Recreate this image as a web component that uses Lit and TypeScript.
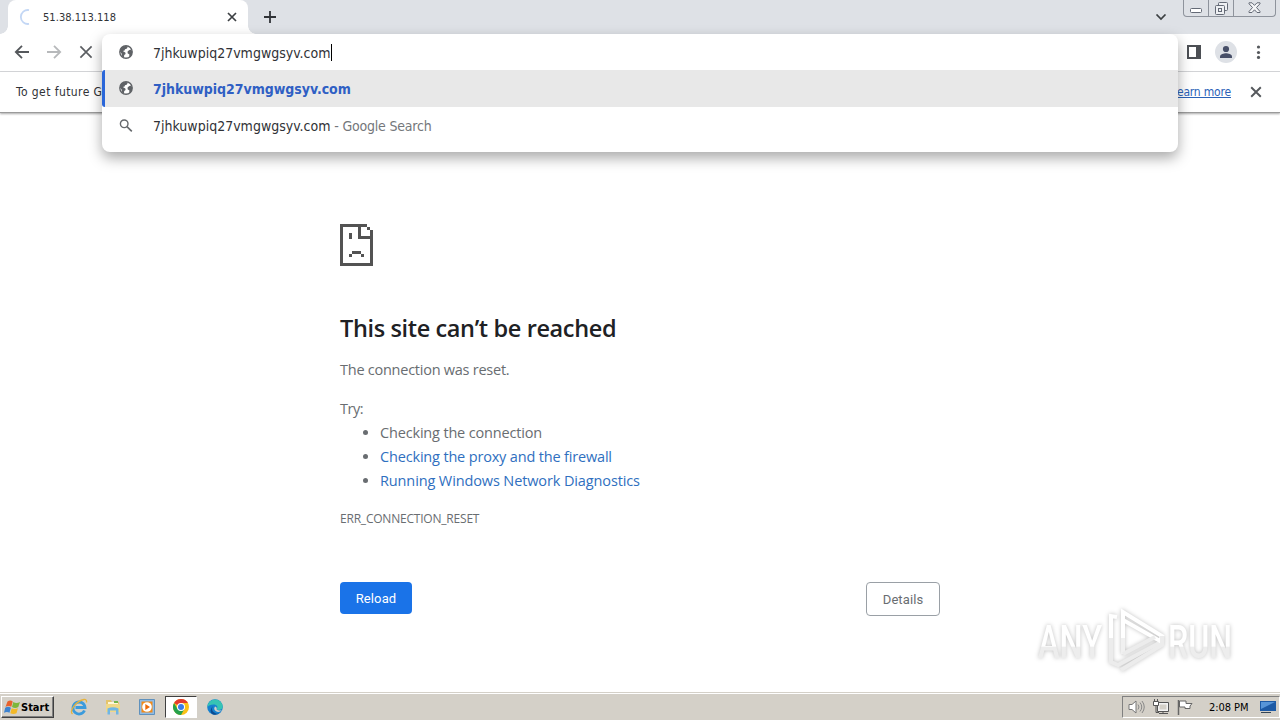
import { LitElement, html, css } from "lit";
import { customElement } from "lit/decorators.js";

const globe = html`<svg width="14" height="14" viewBox="0 0 14 14"><circle cx="7" cy="7" r="6.200" fill="#fff" stroke="#5f6266" stroke-width="1.400"/><path fill="#5f6266" d="M.9 6.500C1 3 4 .8 7.500.9L8.600 2 8 3.600 6 4.200 5.600 5.600 3.800 6 6.300 7.600 6.600 9 5.200 10 5 12.500 3 11.500 2.600 8.600z"/><path fill="#5f6266" d="M10 5.200L11.500 4.600 13.200 6 13 9 11 12 10.200 11.300 10.400 9.500 8.600 8.300 8.600 6.500z"/></svg>`;

const cross = (size: number, color: string, weight: number) => html`<svg width=${size} height=${size} viewBox="0 0 10 10"><path d="M1 1L9 9M9 1L1 9" stroke=${color} stroke-width=${weight} fill="none"/></svg>`;

@customElement("browser-chrome")
export class BrowserChrome extends LitElement {
  static styles = css`
    :host { display: block; font-family: "DejaVu Sans Condensed", "DejaVu Sans", sans-serif; color: #303236; }
    svg { display: block; flex: none; }
    .tabs { height: 34px; background: #dee1e6; display: flex; align-items: stretch; }
    .tab { position: relative; width: 240px; margin-left: 8px; background: #fff; border-radius: 8px 8px 0 0; display: flex; align-items: center; box-sizing: border-box; padding: 0 11px 0 11px; }
    .tab::before, .tab::after { content: ""; position: absolute; bottom: 0; width: 8px; height: 8px; }
    .tab::before { left: -8px; background: radial-gradient(circle at 0 0, transparent 7.5px, #fff 8px); }
    .tab::after { right: -8px; background: radial-gradient(circle at 100% 0, transparent 7.5px, #fff 8px); }
    .title { flex: 1; margin-left: 8px; font-size: 11px; letter-spacing: 0.05px; }
    .plus { margin: 11px 0 0 16px; }
    .chevron { margin: 14px 0 0 auto; }
    .controls { display: flex; width: 91px; height: 16px; margin: 0 4px 0 16px; border: 1px solid #8e939c; border-top: 0; border-radius: 0 0 4px 4px; box-sizing: content-box; }
    .controls span { display: flex; align-items: center; justify-content: center; border-right: 1px solid #8e939c; width: 24px; }
    .controls span:last-child { border: 0; width: auto; flex: 1; }
    .bar { background: #fff; border-bottom: 1px solid #d5d7da; display: flex; align-items: center; box-sizing: border-box; height: 38px; padding: 0 15px 1px 14px; }
    .nav { display: flex; gap: 17.5px; align-items: center; }
    .right { margin-left: auto; display: flex; align-items: center; }
    .avatar { margin: 0 15px 0 14px; }
    .info { height: 40px; background: #fff; border-bottom: 1px solid #9b9b9b; box-shadow: 0 1px 2px #aaa; display: flex; align-items: center; padding: 0 18px 0 16px; font-size: 12px; }
    .message { letter-spacing: .42px; }
    .link { margin-left: auto; margin-right: 19px; color: #2b62b8; text-decoration: underline; letter-spacing: -.18px; }
  `;
  render() {
    return html`
      <div class="tabs">
        <div class="tab">
          <svg width="16" height="16" viewBox="0 0 16 16"><path d="M10 1.100A7 7 0 1 0 10 14.900" fill="none" stroke="#c3d7f5" stroke-width="1.800"/></svg>
          <span class="title">51.38.113.118</span>${cross(10, "#3c4043", 1.7)}
        </div>
        <svg class="plus" width="12" height="12" viewBox="0 0 12 12"><path d="M6 0V12M0 6H12" stroke="#303338" stroke-width="1.800"/></svg>
        <svg class="chevron" width="12" height="7" viewBox="0 0 12 7"><path d="M1.500 .5L6 5L10.500 .5" fill="none" stroke="#3c4043" stroke-width="1.700"/></svg>
        <div class="controls">
          <span><svg width="13" height="12"><rect x=".5" y="6.500" width="11" height="4" rx="1" fill="#fff" stroke="#646a76"/></svg></span>
          <span><svg width="13" height="13"><g fill="#eef0f3" stroke="#646a76"><rect x="3.500" y=".5" width="9" height="8" rx="1"/><rect x=".5" y="3.500" width="9" height="9" rx="1"/><rect x="3.500" y="6.500" width="3" height="3"/></g></svg></span>
          <span><svg width="13" height="12"><path d="M1 .8h3l2.500 2.600L9 .8h3v1L8.500 5.500 12 9.500v1H9L6.500 7.800 4 10.500H1v-1L4.500 5.500 1 1.800z" fill="#f4f5f7" stroke="#646a76"/></svg></span>
        </div>
      </div>
      <div class="bar">
        <div class="nav">
          <svg width="15" height="14" viewBox="0 0 15 14"><path d="M15 7H2M8 .8L1.800 7L8 13.200" fill="none" stroke="#55585c" stroke-width="1.800"/></svg>
          <svg width="15" height="14" viewBox="0 0 15 14"><path d="M0 7H13M7 .8L13.200 7L7 13.200" fill="none" stroke="#b7b9bb" stroke-width="1.800"/></svg>
          ${cross(14, "#5b5e62", 1.2)}
        </div>
        <div class="right">
          <svg width="14" height="14"><path d="M1 1H13V13H1Z" fill="#fff" stroke="#4c4f54" stroke-width="2"/><path d="M9 0h5v14H9z" fill="#4c4f54"/></svg>
          <svg class="avatar" width="22" height="22"><circle cx="11" cy="11" r="11" fill="#dee1e6"/><circle cx="11" cy="8" r="3.100" fill="#474f68"/><path d="M5 17v-1.500c0-2.200 4-3.300 6-3.300s6 1.100 6 3.300V17z" fill="#474f68"/></svg>
          <svg width="13" height="14"><g fill="#55585c"><circle cx="6.500" cy="2" r="1.600"/><circle cx="6.500" cy="7.500" r="1.600"/><circle cx="6.500" cy="12.400" r="1.600"/></g></svg>
        </div>
      </div>
      <div class="info"><span class="message">To get future Google</span><span class="link">Learn more</span>${cross(12, "#55585c", 1.6)}</div>
    `;
  }
}

@customElement("omnibox-popup")
export class OmniboxPopup extends LitElement {
  static styles = css`
    :host { display: block; background: #fff; border-radius: 8px; overflow: hidden; font: 14px "DejaVu Sans Condensed", "DejaVu Sans", sans-serif; color: #303236; box-shadow: 0 6px 14px rgba(0, 0, 0, .34); }
    .row { display: flex; align-items: center; height: 37px; padding-left: 17px; white-space: pre; }
    .input { height: 36px; }
    .selected { background: #e8e8e8; border-left: 3px solid #2a66d9; border-radius: 3px 0 0 3px; padding-left: 14px; color: #2f5fc4; font-weight: bold; }
    .selected svg { margin-bottom: 1px; }
    .text { margin-left: 20px; }
    .input .text { padding-top: 1px; }
    .selected .text { letter-spacing: -.04px; }
    .input .text, .last .text { letter-spacing: 0; }
    .caret { width: 1px; height: 17px; margin-left: 1px; background: #000; }
    .dim { color: #74777b; letter-spacing: -.2px; }
    .last { height: 38px; }
    svg { display: block; flex: none; }
  `;
  render() {
    return html`
      <div class="row input">${globe}<span class="text">7jhkuwpiq27vmgwgsyv.com</span><i class="caret"></i></div>
      <div class="row selected">${globe}<span class="text">7jhkuwpiq27vmgwgsyv.com</span></div>
      <div class="row last">
        <svg width="14" height="14" viewBox="0 0 14 14"><circle cx="5.200" cy="4.800" r="3.800" fill="none" stroke="#66696d" stroke-width="1.400"/><path d="M8 7.600L12.800 12.400" stroke="#66696d" stroke-width="1.600"/></svg>
        <span class="text">7jhkuwpiq27vmgwgsyv.com</span><span class="dim"> - Google Search</span>
      </div>`;
  }
}

@customElement("error-page")
export class ErrorPage extends LitElement {
  static styles = css`
    :host { display: block; width: 600px; margin: 0 auto; padding-top: 111px; font: 14.5px/24px "Open Sans", "Noto Sans", sans-serif; color: #696d71; }
    svg { display: block; }
    h1 { margin: 47px 0 0; font-size: 23.5px; line-height: 30px; font-weight: 600; color: #202124; letter-spacing: -.37px; }
    p { margin: 15px 0 0; }
    .p1 { letter-spacing: -.25px; }
    .try { margin-top: 15px; letter-spacing: -.5px; }
    ul { margin: 0; padding-left: 40px; }
    .l1 { letter-spacing: -.17px; }
    .l2 { letter-spacing: -.17px; }
    .l3 { letter-spacing: -.12px; }
    .blue { color: #2f6fc0; }
    .code { font-size: 12px; margin-top: 14px; letter-spacing: -.21px; }
    .actions { display: flex; justify-content: space-between; margin-top: 51px; font: 13px/33px Roboto, "Liberation Sans", sans-serif; letter-spacing: .1px; }
    .btn { box-sizing: border-box; text-align: center; border-radius: 4px; }
    .reload { width: 72px; height: 32px; color: #fff; background: #1a73e8; }
    .details { width: 74px; height: 34px; border: 1px solid #9aa0a6; }
  `;
  render() {
    return html`
      <svg width="33" height="42" viewBox="0 0 11 14" shape-rendering="crispEdges"><path fill="#535353" d="M0 0h9v1H7v3h3V2h1v12H0zM1 1v12h9V5H6V1zM9 1h1v1H9zM3 3h1v2H3zM4 9h3v1H4zM3 10h1v1H3zM7 10h1v1H7z" fill-rule="evenodd"/></svg>
      <h1>This site can’t be reached</h1>
      <p><span class="p1">The connection was reset.</span></p>
      <p class="try">Try:</p>
      <ul>
        <li><span class="l1">Checking the connection</span></li>
        <li><span class="blue l2">Checking the proxy and the firewall</span></li>
        <li><span class="blue l3">Running Windows Network Diagnostics</span></li>
      </ul>
      <p class="code">ERR_CONNECTION_RESET</p>
      <div class="actions"><div class="btn reload">Reload</div><div class="btn details">Details</div></div>`;
  }
}

@customElement("win-taskbar")
export class WinTaskbar extends LitElement {
  static styles = css`
    :host { display: flex; align-items: center; box-sizing: border-box; height: 28px; padding: 1px 0 0 1px; background: #d4d0c8; border-top: 1px solid #d4d0c8; box-shadow: inset 0 1px #fff; font: 11px "DejaVu Sans Condensed", "DejaVu Sans", sans-serif; color: #000; }
    svg { display: block; flex: none; }
    .start { display: flex; align-items: center; box-sizing: border-box; width: 53px; height: 22px; padding-left: 2px; border: 1px solid; border-color: #fff #404040 #404040 #fff; box-shadow: inset -1px -1px #808080; font-weight: bold; letter-spacing: 0; }
    .apps { display: flex; align-items: center; margin-left: 8px; }
    .app { display: flex; align-items: center; justify-content: center; width: 34px; height: 22px; box-sizing: border-box; }
    .active { width: 32px; margin: 0 1px; background: #fff; border: 1px solid; border-color: #404040 #fff #fff #404040; }
    .tray { display: flex; align-items: center; gap: 8px; margin-left: auto; width: 158px; height: 22px; box-sizing: border-box; padding-left: 5px; border: 1px solid; border-color: #808080 #fff #fff #808080; }
    .clock { margin-left: 8px; letter-spacing: -.05px; white-space: nowrap; }
    .desk { margin-left: 3px; }
  `;
  render() {
    return html`
      <div class="start">
        <svg width="17" height="16" viewBox="0 0 17 16"><path d="M3.500 2.500q3-2 5.200 0L7.300 7.700Q4 6 1.500 8z" fill="#e8622c"/><path d="M9.300 3q3 2 6.700 0L14.300 8q-3 2-6.300 0z" fill="#7db73b"/><path d="M1.200 8.800q3-2 5.700 0L5.500 13.800Q3 12 0 13.800z" fill="#3d83d0"/><path d="M7.700 9.200q3 1.500 6.200 0L12.500 14.300q-3 1.500-6.200 0z" fill="#f3b928"/></svg>
        <span>Start</span>
      </div>
      <div class="apps">
        <div class="app"><svg width="18" height="18" viewBox="0 0 18 18"><path d="M14.500 12.500A6 6 0 1 1 15 9.500H5.500" fill="none" stroke="#3b9bdc" stroke-width="2.800"/><path d="M2.500 16C-1 13 6 3 14 1.500q3-.4 2.500 3" fill="none" stroke="#e6b33d" stroke-width="1.300"/></svg></div>
        <div class="app"><svg width="16" height="16" viewBox="0 0 16 16"><path d="M1 1h5l1 2h7v10H1z" fill="#e4c46c"/><path d="M3 3h10v4H3z" fill="#fff7d8"/><path d="M1 5h14v8H1z" fill="#f0d888"/><path d="M2.500 15.500v-6q5.500-2.500 11 0v6h-2.500v-4H5v4z" fill="#70b6e4"/><path d="M9 2h4v2H9z" fill="#75b64c"/></svg></div>
        <div class="app"><svg width="16" height="16" viewBox="0 0 16 16"><path d="M.5.5h15v15H.5z" fill="#8fbce6" stroke="#5f91bd"/><path d="M2.500 2.500h11v11h-11z" fill="#f28a18"/><circle cx="8" cy="8" r="4.800" fill="#fff"/><path d="M6.300 5L11 8 6.300 11z" fill="#ed6a09"/></svg></div>
        <div class="app active"><svg width="16" height="16" viewBox="0 0 16 16"><circle cx="8" cy="8" r="8" fill="#fbc116"/><path d="M8 8L1.070 4A8 8 0 0 1 14.930 4H8z" fill="#e33b2e"/><path d="M1.070 4A8 8 0 0 0 8 16L11.400 10 8 8 4.500 10z" fill="#25a14c"/><circle cx="8" cy="8" r="4" fill="#fff"/><circle cx="8" cy="8" r="3" fill="#3a7ce8"/></svg></div>
        <div class="app"><svg width="16" height="16" viewBox="0 0 16 16"><circle cx="8" cy="8" r="7.800" fill="#1580cf"/><path d="M.4 7A7.700 7.700 0 0 1 15.700 7.500C16 11 11 12 9.500 10c2-2 .5-4.500-3-4.500Q2 5.500.4 8z" fill="#36c4b4"/><path d="M6 7q-3 5 3 7.500 3 .7 5-1.500A8 8 0 0 1 6 15.500Q1 12 6 7z" fill="#0b4b91"/><path d="M8 7.500q2.500 1 1.500 2.800 2 2 5.500.7-3 3-6 1.200T8 7.500z" fill="#d4d0c8"/></svg></div>
      </div>
      <div class="tray">
        <svg width="17" height="16" viewBox="0 0 17 16"><path d="M1 5.500h3L8 2v12l-4-3.500H1z" fill="#fff" stroke="#777"/><path d="M10 5.500q2 2.500 0 5M12 3.500q3.500 4.500 0 9M14 2q4.500 6 0 12" fill="none" stroke="#888"/></svg>
        <svg width="16" height="16" viewBox="0 0 16 16"><path d="M4.500 3.500h11v9h-11z" fill="#f4f4f4" stroke="#555"/><path d="M6.500 5.500h7v5h-7z" fill="#d4d0c8"/><path d="M6 14.500h9M10 13v2" stroke="#555"/><path d="M.5 2.500h5v4h-5z" fill="#fff" stroke="#555"/><path d="M1.500 0v2M4.500 0v2M3 7v6.500h3" fill="none" stroke="#555"/></svg>
        <svg width="16" height="16" viewBox="0 0 16 16"><path d="M1.500 1v15" stroke="#666" stroke-width="1.500"/><path d="M2.500 2h6.500v2.500h6l-2 2.500v2.500H8V8H2.500z" fill="#fff" stroke="#666"/></svg>
        <span class="clock">2:08 PM</span>
        <svg class="desk" width="16" height="14" viewBox="0 0 16 14"><path d="M0 1h16v10H0z" fill="#1d5aa5"/><path d="M1 2h14L1 9z" fill="#5795d8"/><path d="M1 12h10v1H1z" fill="#345"/></svg>
      </div>`;
  }
}

@customElement("app-root")
export class AppRoot extends LitElement {
  static styles = css`
    :host { display: flex; flex-direction: column; position: relative; width: 1280px; height: 720px; overflow: hidden; background: #fff; }
    .page { flex: 1; min-height: 0; }
    .popup { position: absolute; left: 102px; top: 34px; width: 1076px; height: 118px; }
    .mark { position: absolute; left: 1030px; top: 604px; filter: drop-shadow(0 0 2px rgba(0, 0, 0, .25)); }
    .word { font: 500 46px "Roboto", sans-serif; }
  `;
  render() {
    return html`
      <browser-chrome></browser-chrome>
      <div class="page"><error-page></error-page></div>
      <win-taskbar></win-taskbar>
      <omnibox-popup class="popup"></omnibox-popup>
      <svg class="mark" width="246" height="76" viewBox="0 0 246 76">
        <defs><linearGradient id="fade" x1="0" y1="0" x2="0" y2="1"><stop offset=".58" stop-color="#fff"/><stop offset=".59" stop-color="#ededed"/></linearGradient></defs>
        <text class="word" x="8" y="54" textLength="64" lengthAdjust="spacingAndGlyphs" fill="url(#fade)">ANY</text>
        <text class="word" x="138" y="54" textLength="64" lengthAdjust="spacingAndGlyphs" fill="url(#fade)">RUN</text>
        <g fill="none" stroke-width="4">
          <path d="M87 13l-6-1v22" stroke="#fff"/><path d="M81 34v24l7 3 43-23" stroke="#ececec"/>
          <path d="M93 34v16" stroke="#f0f0f0"/><path d="M93 34V8l39 24-2 5-37-21" stroke="#fff"/>
          <path d="M93 50l32-17" stroke="#ececec"/><path d="M91 66l41-25v-9" stroke="#ececec"/>
        </g>
      </svg>`;
  }
}
